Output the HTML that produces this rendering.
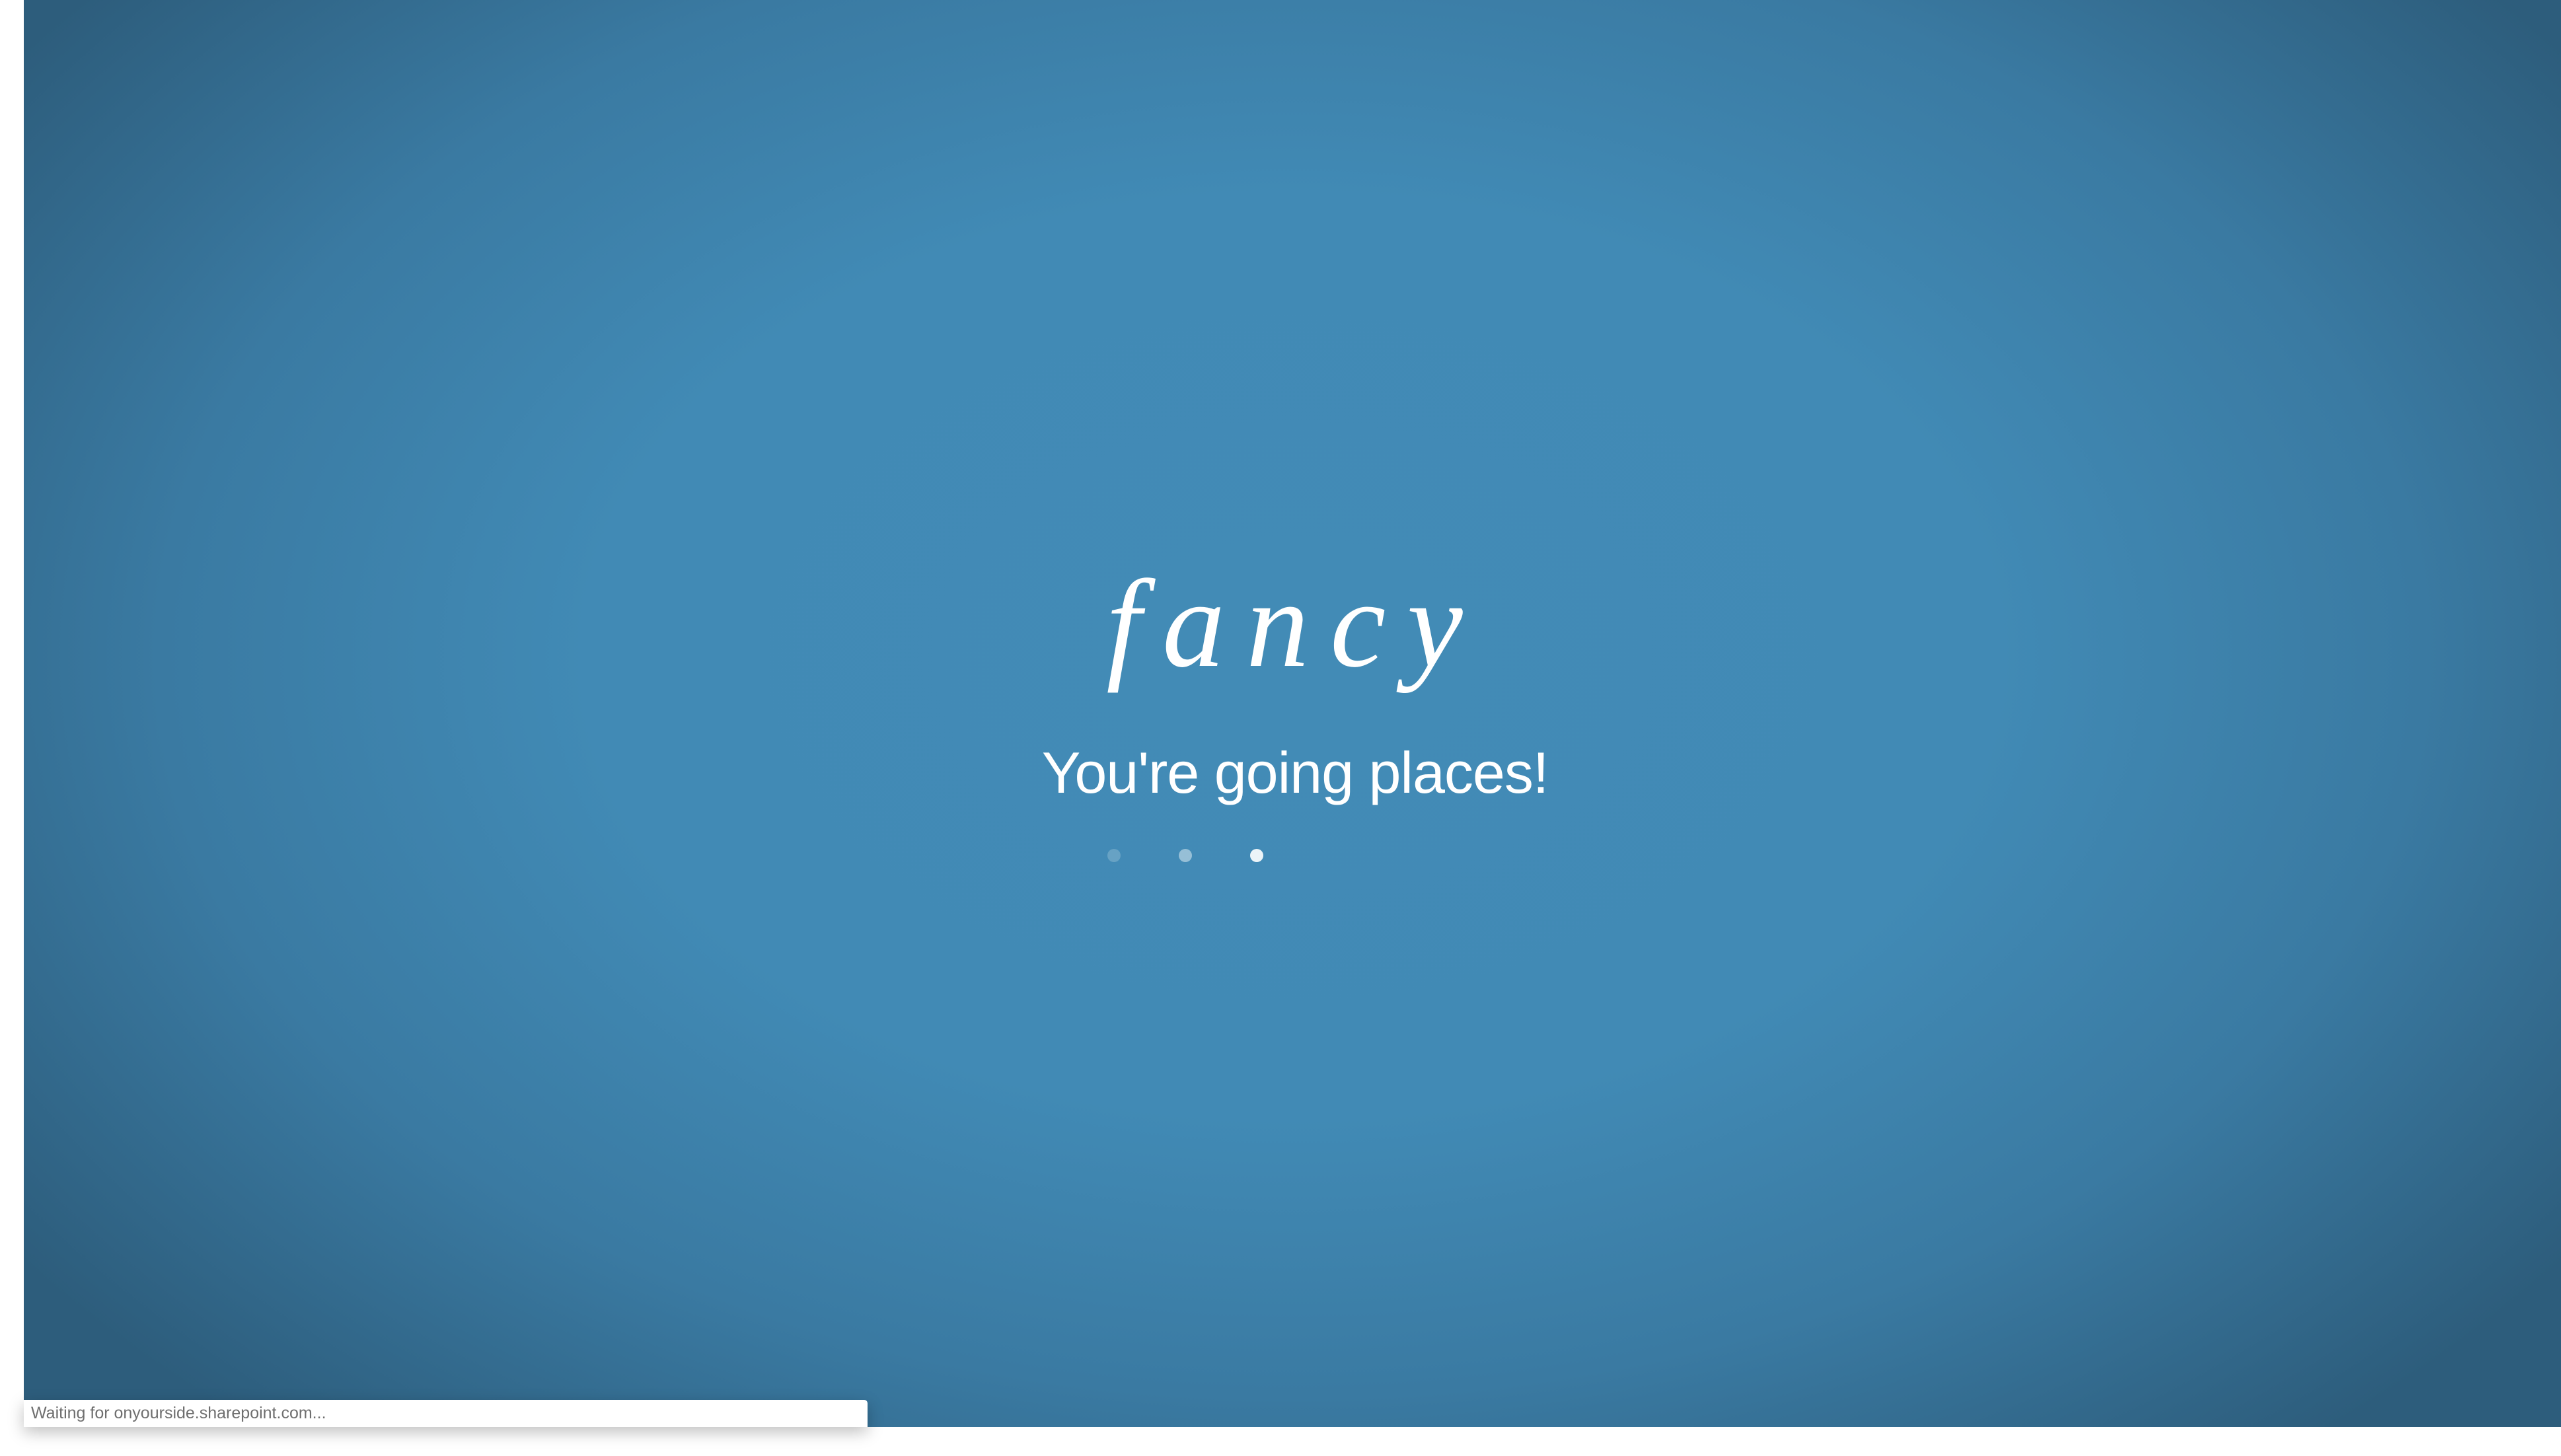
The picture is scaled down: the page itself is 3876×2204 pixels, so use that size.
<!DOCTYPE html>
<html><head><meta charset="utf-8"><style>
html,body{margin:0;padding:0;width:3876px;height:2204px;overflow:hidden;background:#fff;}
#bg{position:absolute;left:36px;top:0;width:3840px;height:2160px;
background:radial-gradient(ellipse 62% 72% at 50% 46%, #428bb6 0%, #418ab5 45%, #3a7aa2 72%, #2d5d7c 100%);}
.fancy{position:absolute;left:1620px;top:745px;width:680px;text-align:center;color:#fff;
font-family:"Liberation Serif",serif;font-style:italic;font-size:190px;letter-spacing:32px;line-height:400px;}
.tag{position:absolute;left:1540px;top:1110px;width:840px;text-align:center;color:#fff;
font-family:"Liberation Sans",sans-serif;font-size:88px;line-height:120px;letter-spacing:-1px;}
.dot{position:absolute;width:20px;height:20px;border-radius:50%;background:#fff;top:1285px;}
.status{position:absolute;left:36px;top:2119px;width:1277px;height:41px;background:#fff;
border-top-right-radius:5px;box-shadow:0 8px 24px rgba(0,0,0,.25);}
.status span{position:absolute;left:11px;top:6px;font-family:"Liberation Sans",sans-serif;font-size:25px;color:#6e6e6e;}
</style></head><body>
<div id="bg"></div>
<div class="fancy">fancy</div>
<div class="tag">You're going places!</div>
<div class="dot" style="left:1676px;opacity:.2"></div>
<div class="dot" style="left:1784px;opacity:.45"></div>
<div class="dot" style="left:1892px;opacity:.9"></div>
<div class="status"><span>Waiting for onyourside.sharepoint.com...</span></div>
</body></html>
